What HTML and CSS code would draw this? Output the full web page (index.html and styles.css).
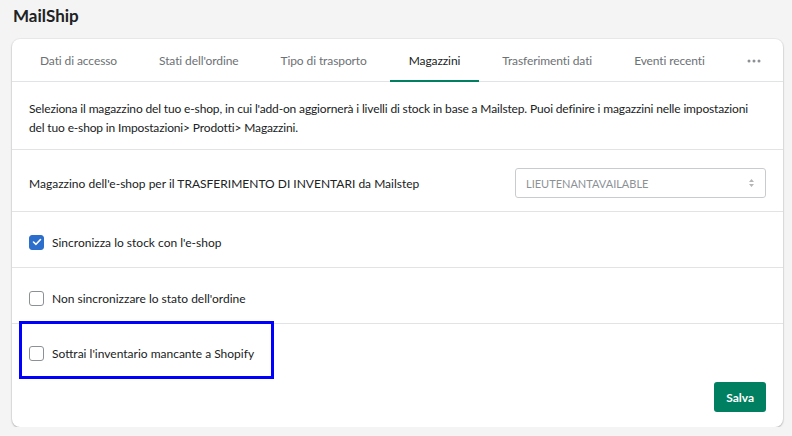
FILE: index.html
```html
<!DOCTYPE html>
<html lang="it">
<head>
    <meta charset="UTF-8">
    <title>MailShip</title>
    <link rel="stylesheet" href="styles.css">
</head>
<body>
    <h1 class="page-title">MailShip</h1>
    <div class="card">
        <ul class="tabs">
            <li class="tab">Dati di accesso</li>
            <li class="tab">Stati dell'ordine</li>
            <li class="tab">Tipo di trasporto</li>
            <li class="tab active">Magazzini</li>
            <li class="tab">Trasferimenti dati</li>
            <li class="tab">Eventi recenti</li>
            <li class="tab more">
                <svg width="14" height="4" viewBox="0 0 14 4"><circle cx="2" cy="2" r="1.5" fill="#8c9196"/><circle cx="7" cy="2" r="1.5" fill="#8c9196"/><circle cx="12" cy="2" r="1.5" fill="#8c9196"/></svg>
            </li>
        </ul>
        <div class="section intro">
            Seleziona il magazzino del tuo e-shop, in cui l'add-on aggiornerà i livelli di stock in base a Mailstep. Puoi definire i magazzini nelle impostazioni del tuo e-shop in Impostazioni&gt; Prodotti&gt; Magazzini.
        </div>
        <div class="section field">
            <span>Magazzino dell'e-shop per il TRASFERIMENTO DI INVENTARI da Mailstep</span>
            <div class="select">
                <span>LIEUTENANTAVAILABLE</span>
                <svg width="7" height="10" viewBox="0 0 7 10"><path d="M3.5 1 L6 4 H1 Z M3.5 9 L6 6 H1 Z" fill="#b5b5b5"/></svg>
            </div>
        </div>
        <div class="section check">
            <span class="box checked">
                <svg width="10" height="8" viewBox="0 0 10 8"><path d="M1.5 4 L4 6.3 L8.5 1.5" fill="none" stroke="#fff" stroke-width="1.6" stroke-linecap="round" stroke-linejoin="round"/></svg>
            </span>
            Sincronizza lo stock con l'e-shop
        </div>
        <div class="section check">
            <span class="box"></span>
            Non sincronizzare lo stato dell'ordine
        </div>
        <div class="section last">
            <div class="check-line">
                <span class="box"></span>
                Sottrai l'inventario mancante a Shopify
            </div>
            <div class="highlight"></div>
            <div class="actions">
                <button class="btn">Salva</button>
            </div>
        </div>
    </div>
</body>
</html>
```

FILE: styles.css
```css
html, body {
    margin: 0;
    padding: 0;
}
body {
    background: #f4f4f4;
    font-family: Lato, "Liberation Sans", sans-serif;
    font-size: 12px;
    color: #202223;
    padding: 0 9px 0 12px;
}
.page-title {
    margin: 0;
    padding: 5px 0 0 1px;
    height: 34px;
    font-size: 17px;
    font-weight: 700;
    line-height: 22px;
}
.card {
    position: relative;
    background: #fff;
    border-radius: 8px;
    box-shadow: 0 1px 2px rgba(0, 0, 0, 0.25), 0 0 0 1px rgba(0, 0, 0, 0.04);
    overflow: hidden;
}
.tabs {
    display: flex;
    gap: 4px;
    margin: 0;
    padding: 0 0 0 9px;
    list-style: none;
    height: 42px;
    border-bottom: 1px solid #e1e3e5;
}
.tab {
    padding: 2px 19px 0;
    line-height: 40px;
    letter-spacing: -0.1px;
    white-space: nowrap;
    color: #6d7175;
    border-bottom: 2px solid transparent;
    margin-bottom: -1px;
}
.tab.active {
    color: #202223;
    border-bottom-color: #008060;
}
.tab.more {
    display: flex;
    align-items: center;
    padding: 2px 19px 0;
}
.section {
    border-bottom: 1px solid #e1e3e5;
    padding: 0 17px;
}
.intro {
    padding-top: 17px;
    padding-bottom: 12px;
    line-height: 19px;
    letter-spacing: -0.15px;
}
.field {
    display: flex;
    align-items: center;
    justify-content: space-between;
    height: 56px;
    padding-top: 5px;
}
.select {
    display: flex;
    align-items: center;
    justify-content: space-between;
    width: 229px;
    height: 28px;
    padding: 0 10px;
    border: 1px solid #c9cccf;
    border-radius: 3px;
    color: #8c9196;
    font-size: 11px;
}
.check, .check-line {
    display: flex;
    align-items: center;
    height: 50px;
    padding-top: 5px;
}
.box {
    display: inline-flex;
    align-items: center;
    justify-content: center;
    box-sizing: border-box;
    width: 15px;
    height: 15px;
    margin-right: 8px;
    border: 1px solid #8c9196;
    border-radius: 3px;
}
.box.checked {
    background: #2c6ecb;
    border-color: #2c6ecb;
}
.last {
    border-bottom: none;
}
.check-line {
    height: 58px;
    padding-top: 0;
}
.highlight {
    position: absolute;
    left: 7px;
    top: 282px;
    width: 249px;
    height: 52px;
    border: 3px solid #0000ff;
}
.actions {
    display: flex;
    justify-content: flex-end;
    padding-bottom: 15px;
}
.btn {
    height: 30px;
    padding: 0 12px;
    border: none;
    border-radius: 3px;
    background: #008060;
    color: #fff;
    font-family: inherit;
    font-size: 12px;
    font-weight: 700;
}
```
